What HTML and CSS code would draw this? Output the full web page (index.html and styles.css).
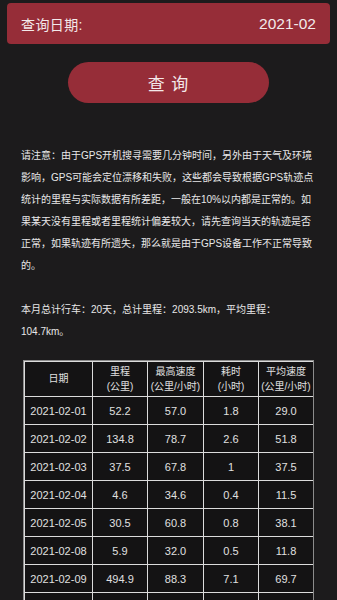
FILE: index.html
```html
<!DOCTYPE html>
<html lang="zh-CN">
<head>
<meta charset="utf-8">
<title>查询</title>
<link rel="stylesheet" href="styles.css">
</head>
<body>
<div class="datebar">
  <span class="datebar-label">查询日期:</span>
  <span class="datebar-value">2021-02</span>
</div>
<div class="btn-row">
  <button class="query-btn">查 询</button>
</div>
<p class="notice">请注意：由于GPS开机搜寻需要几分钟时间，另外由于天气及环境影响，GPS可能会定位漂移和失败，这些都会导致根据GPS轨迹点统计的里程与实际数据有所差距，一般在10%以内都是正常的。如果某天没有里程或者里程统计偏差较大，请先查询当天的轨迹是否正常，如果轨迹有所遗失，那么就是由于GPS设备工作不正常导致的。</p>
<p class="summary">本月总计行车：20天，总计里程：2093.5km，平均里程：104.7km。</p>
<table class="stats">
  <colgroup>
    <col class="c-date"><col class="c-num"><col class="c-num2"><col class="c-num"><col class="c-num">
  </colgroup>
  <thead>
    <tr><th>日期</th><th>里程<br>(公里)</th><th>最高速度<br>(公里/小时)</th><th>耗时<br>(小时)</th><th>平均速度<br>(公里/小时)</th></tr>
  </thead>
  <tbody>
    <tr><td>2021-02-01</td><td>52.2</td><td>57.0</td><td>1.8</td><td>29.0</td></tr>
    <tr><td>2021-02-02</td><td>134.8</td><td>78.7</td><td>2.6</td><td>51.8</td></tr>
    <tr><td>2021-02-03</td><td>37.5</td><td>67.8</td><td>1</td><td>37.5</td></tr>
    <tr><td>2021-02-04</td><td>4.6</td><td>34.6</td><td>0.4</td><td>11.5</td></tr>
    <tr><td>2021-02-05</td><td>30.5</td><td>60.8</td><td>0.8</td><td>38.1</td></tr>
    <tr><td>2021-02-08</td><td>5.9</td><td>32.0</td><td>0.5</td><td>11.8</td></tr>
    <tr><td>2021-02-09</td><td>494.9</td><td>88.3</td><td>7.1</td><td>69.7</td></tr>
    <tr class="empty-row"><td></td><td></td><td></td><td></td><td></td></tr>
  </tbody>
</table>
</body>
</html>
```

FILE: styles.css
```css
html, body {
  margin: 0;
  padding: 0;
  background: #1c1b1c;
}
body {
  font-family: "Liberation Sans", "Noto Sans CJK SC", sans-serif;
  color: #e4e4e4;
  overflow: hidden;
  height: 600px;
}
.datebar {
  margin: 3px 7px 0;
  height: 41px;
  background: #962d38;
  border-radius: 4px;
  padding: 0 14px;
  display: flex;
  align-items: center;
  justify-content: space-between;
  color: #f3e9ea;
}
.datebar-label {
  font-size: 14px;
  letter-spacing: 0.4px;
}
.datebar-value {
  font-size: 15.5px;
}
.btn-row {
  display: flex;
  justify-content: center;
  margin-top: 18px;
}
.query-btn {
  width: 201px;
  height: 41px;
  border: none;
  border-radius: 21px;
  background: #962d38;
  color: #f3e9ea;
  font-family: "Liberation Sans", "Noto Sans CJK SC", sans-serif;
  font-size: 17px;
  letter-spacing: 1px;
  padding: 0;
}
.notice, .summary {
  margin: 0;
  padding: 0 21px;
  font-size: 10px;
  line-height: 22px;
  color: #e8e8e8;
  text-align: left;
}
.notice {
  margin-top: 42px;
}
.summary {
  margin-top: 22px;
}
.stats {
  margin: 17px auto 0;
  width: 290px;
  table-layout: fixed;
  border-collapse: separate;
  border-spacing: 0;
  border: 1px solid #8c8c8c;
  color: #e0e0e0;
}
.c-date { width: 68px; }
.c-num { width: 55px; }
.c-num2 { width: 56px; }
.stats th, .stats td {
  background: #141314;
  border-left: 1px solid #dcdcdc;
  border-top: 1px solid #dcdcdc;
  text-align: center;
  padding: 0;
  font-weight: normal;
}
.stats th {
  height: 34px;
  font-size: 10px;
  line-height: 15.5px;
}
.stats td {
  height: 27px;
  font-size: 11px;
}
```
